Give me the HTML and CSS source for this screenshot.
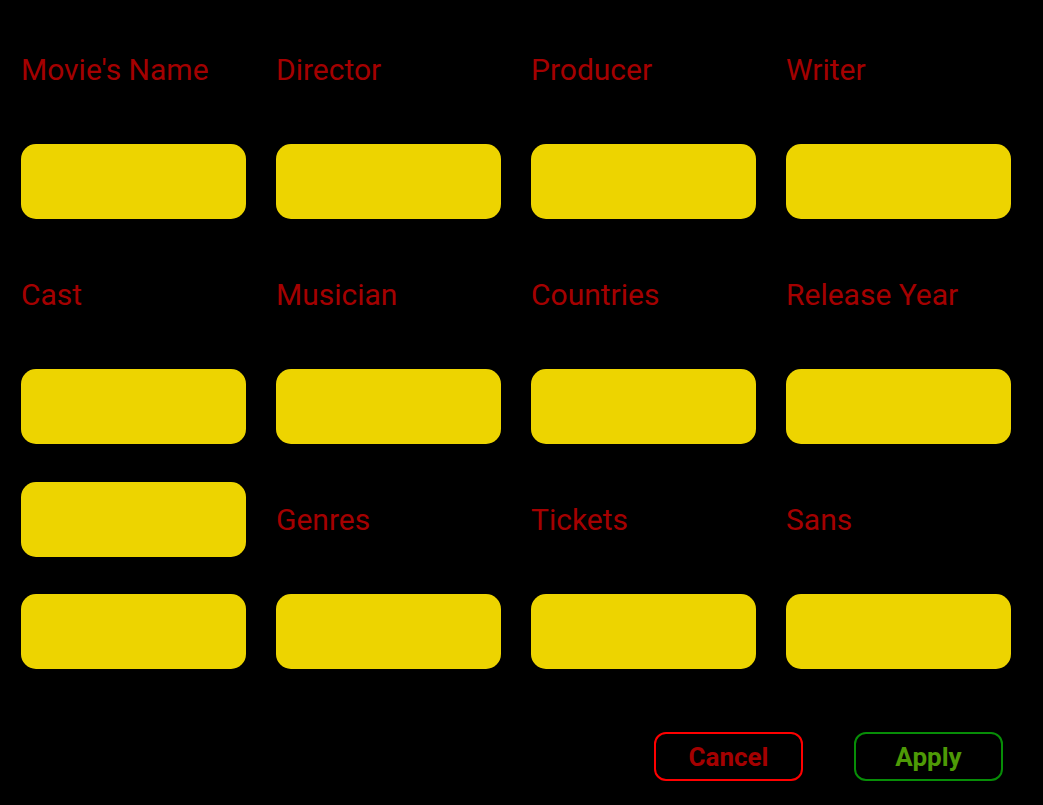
FILE: index.html
```html
<!DOCTYPE html>
<html>
<head>
<meta charset="utf-8">
<link rel="stylesheet" href="styles.css">
</head>
<body>
<div class="form">
  <div class="label">Movie's Name</div>
  <div class="label">Director</div>
  <div class="label">Producer</div>
  <div class="label">Writer</div>
  <div class="field"></div>
  <div class="field"></div>
  <div class="field"></div>
  <div class="field"></div>
  <div class="label">Cast</div>
  <div class="label">Musician</div>
  <div class="label">Countries</div>
  <div class="label">Release Year</div>
  <div class="field"></div>
  <div class="field"></div>
  <div class="field"></div>
  <div class="field"></div>
  <div class="field"></div>
  <div class="label">Genres</div>
  <div class="label">Tickets</div>
  <div class="label">Sans</div>
  <div class="field"></div>
  <div class="field"></div>
  <div class="field"></div>
  <div class="field"></div>
</div>
<div class="actions">
  <button class="btn cancel">Cancel</button>
  <button class="btn apply">Apply</button>
</div>
</body>
</html>
```
FILE: styles.css
```css
html, body {
  margin: 0;
  padding: 0;
  background: #000;
  width: 1043px;
  height: 805px;
  overflow: hidden;
  font-family: Roboto, "Liberation Sans", sans-serif;
}
.form {
  display: grid;
  grid-template-columns: repeat(4, 225px);
  grid-auto-rows: 75px;
  column-gap: 30px;
  row-gap: 37.5px;
  padding: 31.5px 0 0 21px;
}
.label {
  display: flex;
  align-items: center;
  color: #a40000;
  font-size: 30px;
}
.field {
  background: #edd400;
  border-radius: 15px;
}
.actions {
  display: flex;
  justify-content: flex-end;
  gap: 51px;
  padding: 63px 40px 0 0;
}
.btn {
  width: 149px;
  height: 49px;
  background: #000;
  border-radius: 12px;
  border: 2px solid;
  font-family: Roboto, "Liberation Sans", sans-serif;
  font-weight: bold;
  font-size: 26px;
  padding: 0;
  box-sizing: border-box;
}
.cancel {
  border-color: #ff0000;
  color: #a40000;
}
.apply {
  border-color: #078d07;
  color: #4e9a06;
}
```
